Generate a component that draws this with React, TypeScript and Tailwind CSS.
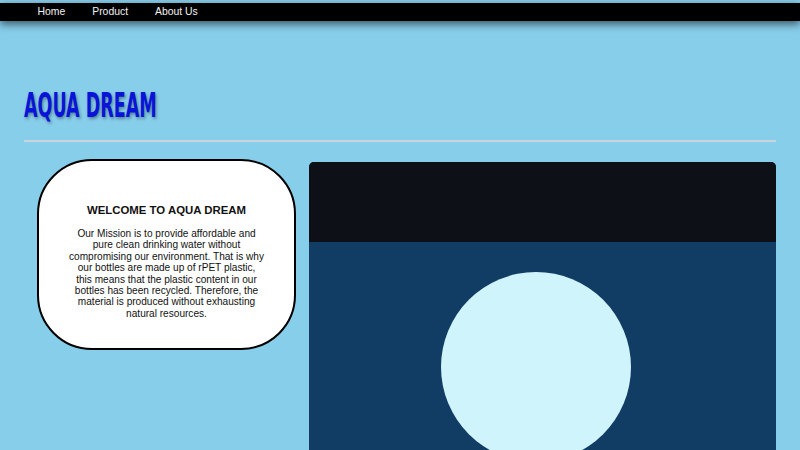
import React from 'react';

const navLinks = ['Home', 'Product', 'About Us'];

const missionLines = [
  'Our Mission is to provide affordable and',
  'pure clean drinking water without',
  'compromising our environment. That is why',
  'our bottles are made up of rPET plastic,',
  'this means that the plastic content in our',
  'bottles has been recycled. Therefore, the',
  'material is produced without exhausting',
  'natural resources.',
];

export default function App() {
  return (
    <div
      className="h-screen overflow-hidden bg-[#87ceeb]"
      style={{ fontFamily: '"Liberation Sans", Arial, sans-serif' }}
    >
      <nav className="mt-[3px] flex h-[18px] items-center bg-black pl-[24px] shadow-[0_3px_8px_rgba(0,0,0,0.6)]">
        {navLinks.map((link) => (
          <a key={link} href="#" className="px-[13.5px] text-[10.4px] leading-none text-[#f2f2f2]">
            {link}
          </a>
        ))}
      </nav>

      <div className="px-[24px]">
        <div className="pt-[68px]">
          <h1
            className="inline-block origin-left scale-x-[0.59] text-[33px] font-bold leading-[33px] text-[#0a14d8] [text-shadow:2px_2px_4px_rgba(0,0,0,0.35)]"
            style={{ fontFamily: '"Liberation Sans Narrow", "DejaVu Sans Condensed", sans-serif' }}
          >
            AQUA DREAM
          </h1>
        </div>

        <div className="mt-[16px] h-[2px] bg-[#c9d5db]" />

        <div className="mt-[17px] flex items-start gap-[13px] pl-[13px]">
          <div className="flex h-[191px] w-[259px] shrink-0 flex-col items-center rounded-[55px] border-2 border-black bg-white px-[20px] pt-[42px] text-center text-[#111]">
            <h3 className="text-[11.4px] font-bold leading-[14px]">WELCOME TO AQUA DREAM</h3>
            <p className="mt-[11px] text-[10.1px] leading-[11.4px]">
              {missionLines.map((line) => (
                <span key={line} className="block whitespace-nowrap">
                  {line}
                </span>
              ))}
            </p>
          </div>

          <div className="mt-[3px] h-[288px] flex-1 overflow-hidden rounded-t-[5px] bg-[#113c64]">
            <div className="h-[80px] bg-[#0d1117]" />
            <div className="flex pt-[30px]">
              <div className="ml-[132px] h-[190px] w-[190px] shrink-0 rounded-full bg-[#cff4fc]" />
            </div>
          </div>
        </div>
      </div>
    </div>
  );
}
